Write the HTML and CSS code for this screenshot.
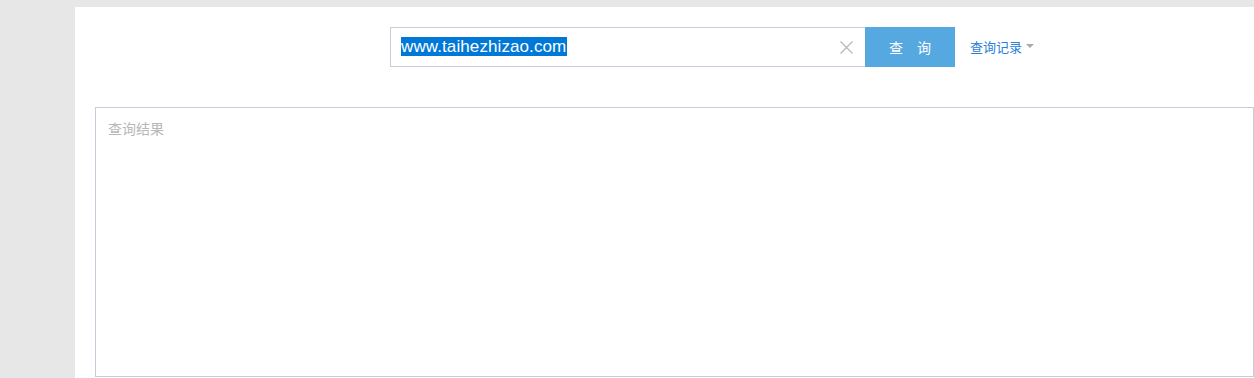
FILE: index.html
```html
<!DOCTYPE html>
<html lang="zh-CN">
<head>
    <meta charset="UTF-8">
    <title>查询</title>
    <link rel="stylesheet" href="styles.css">
</head>
<body>
    <div class="panel">
        <!-- search bar -->
        <div class="search-row">
            <div class="search-input">
                <span class="search-text"><span class="selected">www.taihezhizao.com</span></span>
                <svg class="clear-icon" width="13" height="13" viewBox="0 0 13 13">
                    <path d="M0.5 0.5 L12.5 12.5 M12.5 0.5 L0.5 12.5" stroke="#b4b4b4" stroke-width="1.1" fill="none"/>
                </svg>
            </div>
            <button class="search-btn">查&emsp;询</button>
            <a class="history" href="#">查询记录<span class="caret"></span></a>
        </div>

        <!-- result area -->
        <div class="result-box">
            <div class="result-title">查询结果</div>
        </div>
    </div>
</body>
</html>
```

FILE: styles.css
```css
body {
    margin: 0;
    background-color: #e7e7e7;
    font-family: "Liberation Sans", Arial, "Noto Sans CJK SC", sans-serif;
    overflow: hidden;
}
.panel {
    margin: 7px 0 0 75px;
    padding: 20px 0 0 20px;
    background: #fff;
    height: 371px;
    box-sizing: border-box;
}
.search-row {
    display: flex;
    align-items: center;
    margin-left: 295px;
    height: 40px;
}
.search-input {
    width: 475px;
    height: 40px;
    box-sizing: border-box;
    border: 1px solid #c5cdd8;
    border-right: none;
    display: flex;
    align-items: center;
    padding: 0 12px 0 10px;
}
.search-text {
    flex: 1;
    font-size: 17px;
    line-height: 20px;
    letter-spacing: 0.1px;
}
.selected {
    background: #0078d7;
    color: #fff;
    padding-right: 1px;
}
.clear-icon {
    display: block;
}
.search-btn {
    width: 90px;
    height: 40px;
    border: none;
    background-color: #56a8e1;
    color: #fff;
    font-family: "Noto Sans CJK SC", sans-serif;
    font-size: 14px;
    padding: 0;
    cursor: pointer;
}
.history {
    margin-left: 15px;
    margin-top: -2px;
    color: #2b80d6;
    font-family: "Noto Sans CJK SC", sans-serif;
    font-size: 13px;
    text-decoration: none;
    display: flex;
    align-items: center;
}
.caret {
    width: 0;
    height: 0;
    margin-left: 4px;
    border-left: 4px solid transparent;
    border-right: 4px solid transparent;
    border-top: 4px solid #aaa;
}
.result-box {
    margin-top: 40px;
    height: 270px;
    box-sizing: border-box;
    border: 1px solid #c5cdd8;
    padding: 10px 12px;
}
.result-title {
    color: #b8b8b8;
    font-family: "Noto Sans CJK SC", sans-serif;
    font-size: 14px;
    line-height: 20px;
}
```
